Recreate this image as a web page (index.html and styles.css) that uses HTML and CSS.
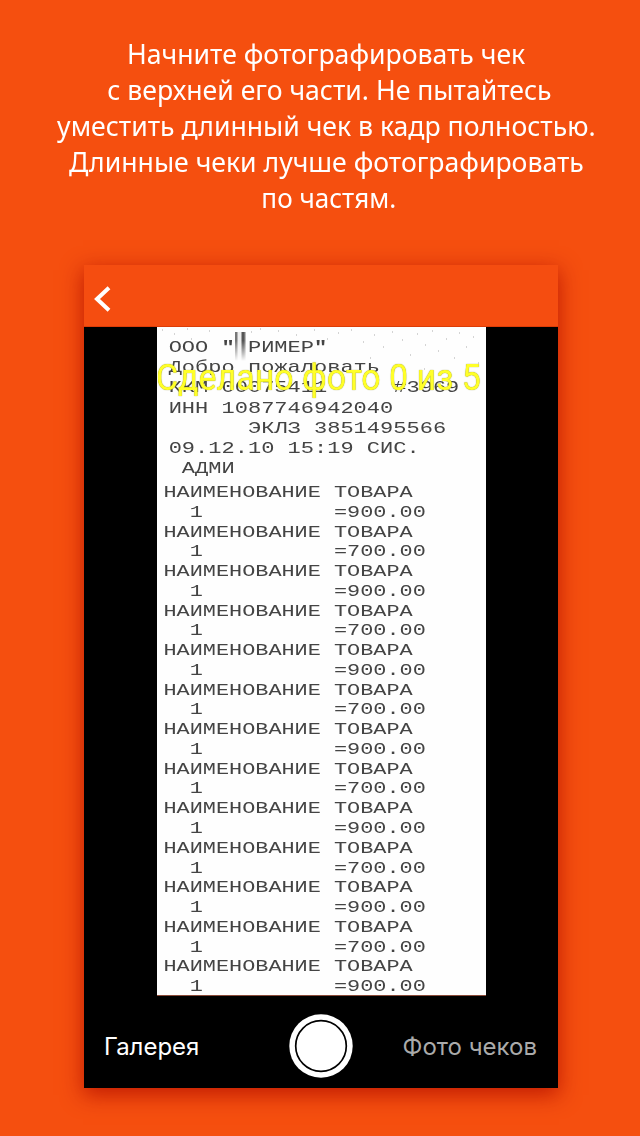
FILE: index.html
```html
<!DOCTYPE html>
<html lang="ru">
<head>
<meta charset="utf-8">
<title>Фото чека</title>
<link rel="stylesheet" href="styles.css">
</head>
<body>
<h1 class="intro">
<span class="l1">Начните фотографировать чек</span>
<span class="l2">с верхней его части. Не пытайтесь</span>
<span class="l3">уместить длинный чек в кадр полностью.</span>
<span class="l4">Длинные чеки лучше фотографировать</span>
<span class="l5">по частям.</span>
</h1>
<main class="phone">
<header class="bar"><svg class="back" viewBox="0 0 18 26"><path d="M16 1.8 4 13 16 24.2"/></svg></header>
<section class="camera">
<div class="receipt">
<svg class="noise" viewBox="0 0 329 90"><path d="M5 3h1M17 7h1M30 2h1M34 12h1M52 4h1M94 5h1M103 2h1M121 4h1M139 8h1M157 3h1M170 12h1M181 6h1M194 3h1M206 15h1M217 8h1M226 20h1M235 5h1M245 13h1M253 28h1M260 7h1M268 18h1M275 4h1M281 24h1M289 12h1M297 31h1M302 6h1M309 20h1M316 10h1M321 36h1M213 31h1M240 38h1M267 42h1"/></svg>
<pre class="head"><span>ООО <b>"</b><i> </i>РИМЕР<b>"</b></span>
Добро пожаловать
ККМ 00075411     #3969
ИНН 1087746942040
      ЭКЛЗ 3851495566
09.12.10 15:19 СИС.
 АДМИ</pre>
<pre class="items">НАИМЕНОВАНИЕ ТОВАРА
  1          =900.00
НАИМЕНОВАНИЕ ТОВАРА
  1          =700.00
НАИМЕНОВАНИЕ ТОВАРА
  1          =900.00
НАИМЕНОВАНИЕ ТОВАРА
  1          =700.00
НАИМЕНОВАНИЕ ТОВАРА
  1          =900.00
НАИМЕНОВАНИЕ ТОВАРА
  1          =700.00
НАИМЕНОВАНИЕ ТОВАРА
  1          =900.00
НАИМЕНОВАНИЕ ТОВАРА
  1          =700.00
НАИМЕНОВАНИЕ ТОВАРА
  1          =900.00
НАИМЕНОВАНИЕ ТОВАРА
  1          =700.00
НАИМЕНОВАНИЕ ТОВАРА
  1          =900.00
НАИМЕНОВАНИЕ ТОВАРА
  1          =700.00
НАИМЕНОВАНИЕ ТОВАРА
  1          =900.00</pre>
<div class="smear"></div>
<div class="count">Сделано фото 0 из 5</div>
</div>
</section>
<footer class="controls">
<span class="gallery">Галерея</span>
<svg class="shutter" viewBox="0 0 64 64"><circle cx="32" cy="32" r="31.7" fill="#fff"/><circle cx="32" cy="32" r="25.3" fill="#fff" stroke="#000" stroke-width="1.7"/></svg>
<span class="photos">Фото чеков</span>
</footer>
</main>
</body>
</html>
```
FILE: styles.css
```css
* { box-sizing: border-box; }
body { margin: 0; height: 1136px; overflow: hidden; background: #f54f0f; display: flex; flex-direction: column; align-items: center; }
.intro { margin: 0; padding: 36px 0 0 13px; height: 265px; display: flex; flex-direction: column; align-items: center; color: #fff; font: 400 27px/36px "Noto Sans", sans-serif; white-space: nowrap; }
.intro span { display: block; transform: scaleX(.985); }
.intro .l2, .intro .l5 { padding-left: 5px; }
.intro .l5 { transform: scaleX(.965); }
.phone { width: 474px; height: 823px; margin-left: 2px; background: #000; display: flex; flex-direction: column; box-shadow: 0 6px 20px 1px rgba(185,20,0,.85); }
.bar { height: 62px; background: #f54d10; border-bottom: 1px solid #dc3c08; padding: 21px 0 0 9px; }
.back { display: block; width: 18px; height: 26px; fill: none; stroke: #fff; stroke-width: 4; }
.camera { height: 669px; padding-left: 73px; }
.receipt { position: relative; width: 329px; height: 669px; background: #fefefe; overflow: hidden; padding-top: 11px; border-bottom: 1px solid #8a4a38; }
pre { margin: 0; color: #444; font-family: "Liberation Mono", monospace; font-size: 17px; transform-origin: 0 0; }
.head { height: 145px; padding-left: 9px; line-height: 20.17px; transform: scaleX(1.295); }
.head i { font-style: normal; }
.items { padding-left: 5px; line-height: 19.76px; transform: scaleX(1.286); }
.noise { position: absolute; left: 0; top: 0; width: 329px; height: 90px; stroke: #aaa; stroke-width: 1; }
.smear { position: absolute; left: 78px; top: 5px; width: 11px; height: 29px; background: linear-gradient(90deg, #777 0 2px, #eee 3px 6px, #555 7px 9px, #ddd); filter: blur(.5px); -webkit-mask-image: linear-gradient(#000 30%, transparent); mask-image: linear-gradient(#000 30%, transparent); }
.count { position: absolute; left: -1px; top: 30px; font: 400 36px/42px Roboto, sans-serif; color: #ffff28; white-space: nowrap; text-shadow: 0 0 1px #777700; transform: scaleX(.943); transform-origin: 0 0; }
.controls { height: 92px; padding: 0 21px 0 20px; display: flex; align-items: center; color: #fff; font: 400 24px/30px Inter, sans-serif; position: relative; justify-content: space-between; }
.shutter { position: absolute; left: 205px; top: 18px; width: 64px; height: 64px; }
.gallery, .photos { padding-top: 9px; white-space: nowrap; }
.photos { color: #aaa; }
```
